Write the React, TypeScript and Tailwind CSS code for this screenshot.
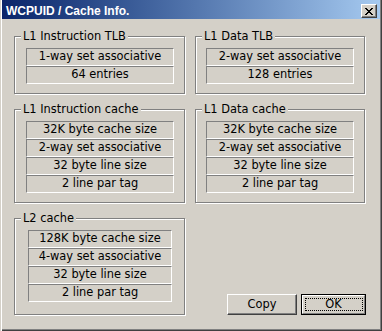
import React from "react";

const FONT = "font-['DejaVu_Sans',sans-serif]";

function Cell({ text, w }: { text: string; w: string }) {
  return (
    <div
      className={`${w} h-[18px] border border-t-[#808080] border-l-[#808080] border-b-white border-r-white flex items-center justify-center text-[11.4px] leading-none text-black whitespace-nowrap`}
    >
      {text}
    </div>
  );
}

function Group({
  label,
  rows,
  size,
  pad,
  rowW,
}: {
  label: string;
  rows: string[];
  size: string;
  pad: string;
  rowW: string;
}) {
  return (
    <div
      className={`relative ${size} border border-[#808080] shadow-[inset_1px_1px_0_#fff,1px_1px_0_#fff] pt-[11px] ${pad} flex flex-col`}
    >
      <div className="absolute left-[6px] top-[-7px] px-[2px] bg-[#d4d0c8] text-[11.4px] leading-[13px] text-black whitespace-nowrap">
        {label}
      </div>
      {rows.map((r, i) => (
        <Cell key={i} text={r} w={rowW} />
      ))}
    </div>
  );
}

function CloseGlyph() {
  const rows: [number, number][][] = [
    [[0, 2], [6, 2]],
    [[1, 2], [5, 2]],
    [[2, 4]],
    [[3, 2]],
    [[2, 4]],
    [[1, 2], [5, 2]],
    [[0, 2], [6, 2]],
  ];
  return (
    <svg width="8" height="7" viewBox="0 0 8 7" shapeRendering="crispEdges">
      {rows.map((segs, y) =>
        segs.map(([x, w], k) => (
          <rect key={`${y}-${k}`} x={x} y={y} width={w} height={1} fill="#000" />
        ))
      )}
    </svg>
  );
}

export default function App() {
  return (
    <div
      className={`${FONT} w-[382px] h-[331px] bg-[#d4d0c8] flex flex-col shadow-[inset_1px_0_0_#d4d0c8,inset_2px_0_0_#fff,inset_-1px_-1px_0_#404040,inset_-2px_-2px_0_#808080] overflow-hidden`}
    >
      {/* Title bar */}
      <div className="mx-[2px] h-[19px] flex items-start justify-between bg-gradient-to-r from-[#0a246a] to-[#a6caf0]">
        <div className="pl-[4px] pt-[4px] font-['Liberation_Sans',Arial,sans-serif] text-[12px] leading-[14px] font-bold text-white whitespace-nowrap">
          WCPUID / Cache Info.
        </div>
        <div className="mt-[4px] mr-[3px] w-[16px] h-[14px] bg-[#d4d0c8] border border-t-white border-l-white border-b-[#404040] border-r-[#404040] shadow-[inset_-1px_-1px_0_#808080] flex items-center justify-center pr-[1px]">
          <CloseGlyph />
        </div>
      </div>

      {/* Content */}
      <div className="mt-[17px] ml-[14px] grid grid-cols-[171px_170px] gap-x-[10px] gap-y-[15px] items-start">
        <Group
          label="L1 Instruction TLB"
          rows={["1-way set associative", "64 entries"]}
          size="w-[171px] h-[58px]"
          pad="pl-[11px]"
          rowW="w-[148px]"
        />
        <Group
          label="L1 Data TLB"
          rows={["2-way set associative", "128 entries"]}
          size="w-[170px] h-[58px]"
          pad="pl-[10px]"
          rowW="w-[148px]"
        />
        <Group
          label="L1 Instruction cache"
          rows={["32K byte cache size", "2-way set associative", "32 byte line size", "2 line par tag"]}
          size="w-[171px] h-[94px]"
          pad="pl-[11px]"
          rowW="w-[148px]"
        />
        <Group
          label="L1 Data cache"
          rows={["32K byte cache size", "2-way set associative", "32 byte line size", "2 line par tag"]}
          size="w-[170px] h-[94px]"
          pad="pl-[10px]"
          rowW="w-[148px]"
        />
        <Group
          label="L2 cache"
          rows={["128K byte cache size", "4-way set associative", "32 byte line size", "2 line par tag"]}
          size="w-[171px] h-[97px]"
          pad="pl-[13px]"
          rowW="w-[144px]"
        />
        <div className="h-[97px] flex items-end justify-end gap-[4px] mr-[-1px] mb-[-1px]">
          <button className="w-[70px] h-[21px] bg-[#d4d0c8] border border-t-white border-l-white border-b-[#404040] border-r-[#404040] shadow-[inset_-1px_-1px_0_#808080] text-[11.4px] leading-none text-black flex items-center justify-center">
            Copy
          </button>
          <button className="relative w-[65px] h-[21px] bg-[#d4d0c8] border border-black flex items-center justify-center text-[11.4px] leading-none text-black">
            <div className="absolute inset-0 border border-t-white border-l-white border-b-[#808080] border-r-[#808080]" />
            <div className="absolute left-[3px] top-[3px] right-[2px] bottom-[3px] border border-dotted border-black" />
            <span className="relative">OK</span>
          </button>
        </div>
      </div>
    </div>
  );
}
